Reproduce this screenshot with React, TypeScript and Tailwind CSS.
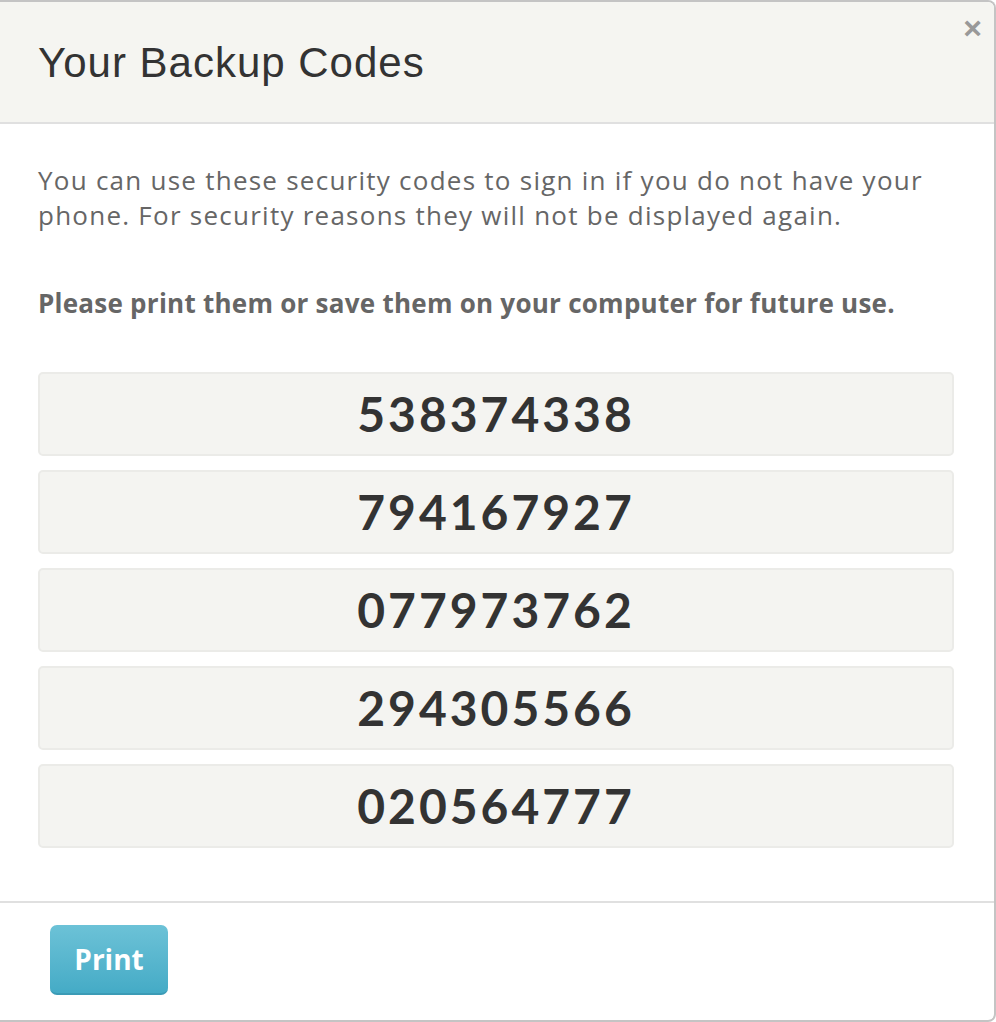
import React from 'react';

const codes = ['538374338', '794167927', '077973762', '294305566', '020564777'];

const App: React.FC = () => {
  return (
    <div className="w-[996px] h-[1022px] bg-white">
      <div className="relative flex h-full flex-col border-y-2 border-r-2 border-[#c4c4c4] rounded-tr-[8px] rounded-br-[8px] overflow-hidden">
        <div className="h-[122px] shrink-0 bg-[#f5f5f1] border-b-2 border-[#e0e0e0] pl-[38px] pt-[36px]">
          <h1 className="font-['Liberation_Sans',Arial,sans-serif] text-[42px] leading-[50px] tracking-[1px] text-[#333]">
            Your Backup Codes
          </h1>
        </div>
        <button className="absolute right-[12px] top-[10px] font-['Liberation_Sans',Arial,sans-serif] text-[32px] font-bold leading-none text-[#999]">
          ×
        </button>

        <div className="flex-1 pl-[38px] pr-[40px] pt-[39px] font-['Open_Sans',sans-serif]">
          <p className="text-[26px] leading-[35px] tracking-[1.25px] text-[#666]">
            You can use these security codes to sign in if you do not have your phone. For security reasons they will not be displayed again.
          </p>
          <p className="mt-[53px] text-[26px] leading-[35px] font-bold tracking-[0.25px] text-[#666]">
            Please print them or save them on your computer for future use.
          </p>
          <div className="mt-[51px] flex flex-col gap-[14px] font-['Lato',sans-serif]">
            {codes.map((code) => (
              <div
                key={code}
                className="flex h-[84px] items-center justify-center rounded-[5px] border-2 border-[#ebebe8] bg-[#f4f4f1] text-[48px] font-bold tracking-[3px] text-[#333]"
              >
                {code}
              </div>
            ))}
          </div>
        </div>

        <div className="h-[119px] shrink-0 border-t-2 border-[#e0e0e0] pl-[50px] pt-[22px]">
          <button className="h-[70px] w-[118px] rounded-[7px] border-b-2 border-[#3b9bb6] bg-gradient-to-b from-[#6cc2d7] to-[#44abc6] font-['Open_Sans',sans-serif] text-[28px] font-bold text-white">
            Print
          </button>
        </div>
      </div>
    </div>
  );
};

export default App;
